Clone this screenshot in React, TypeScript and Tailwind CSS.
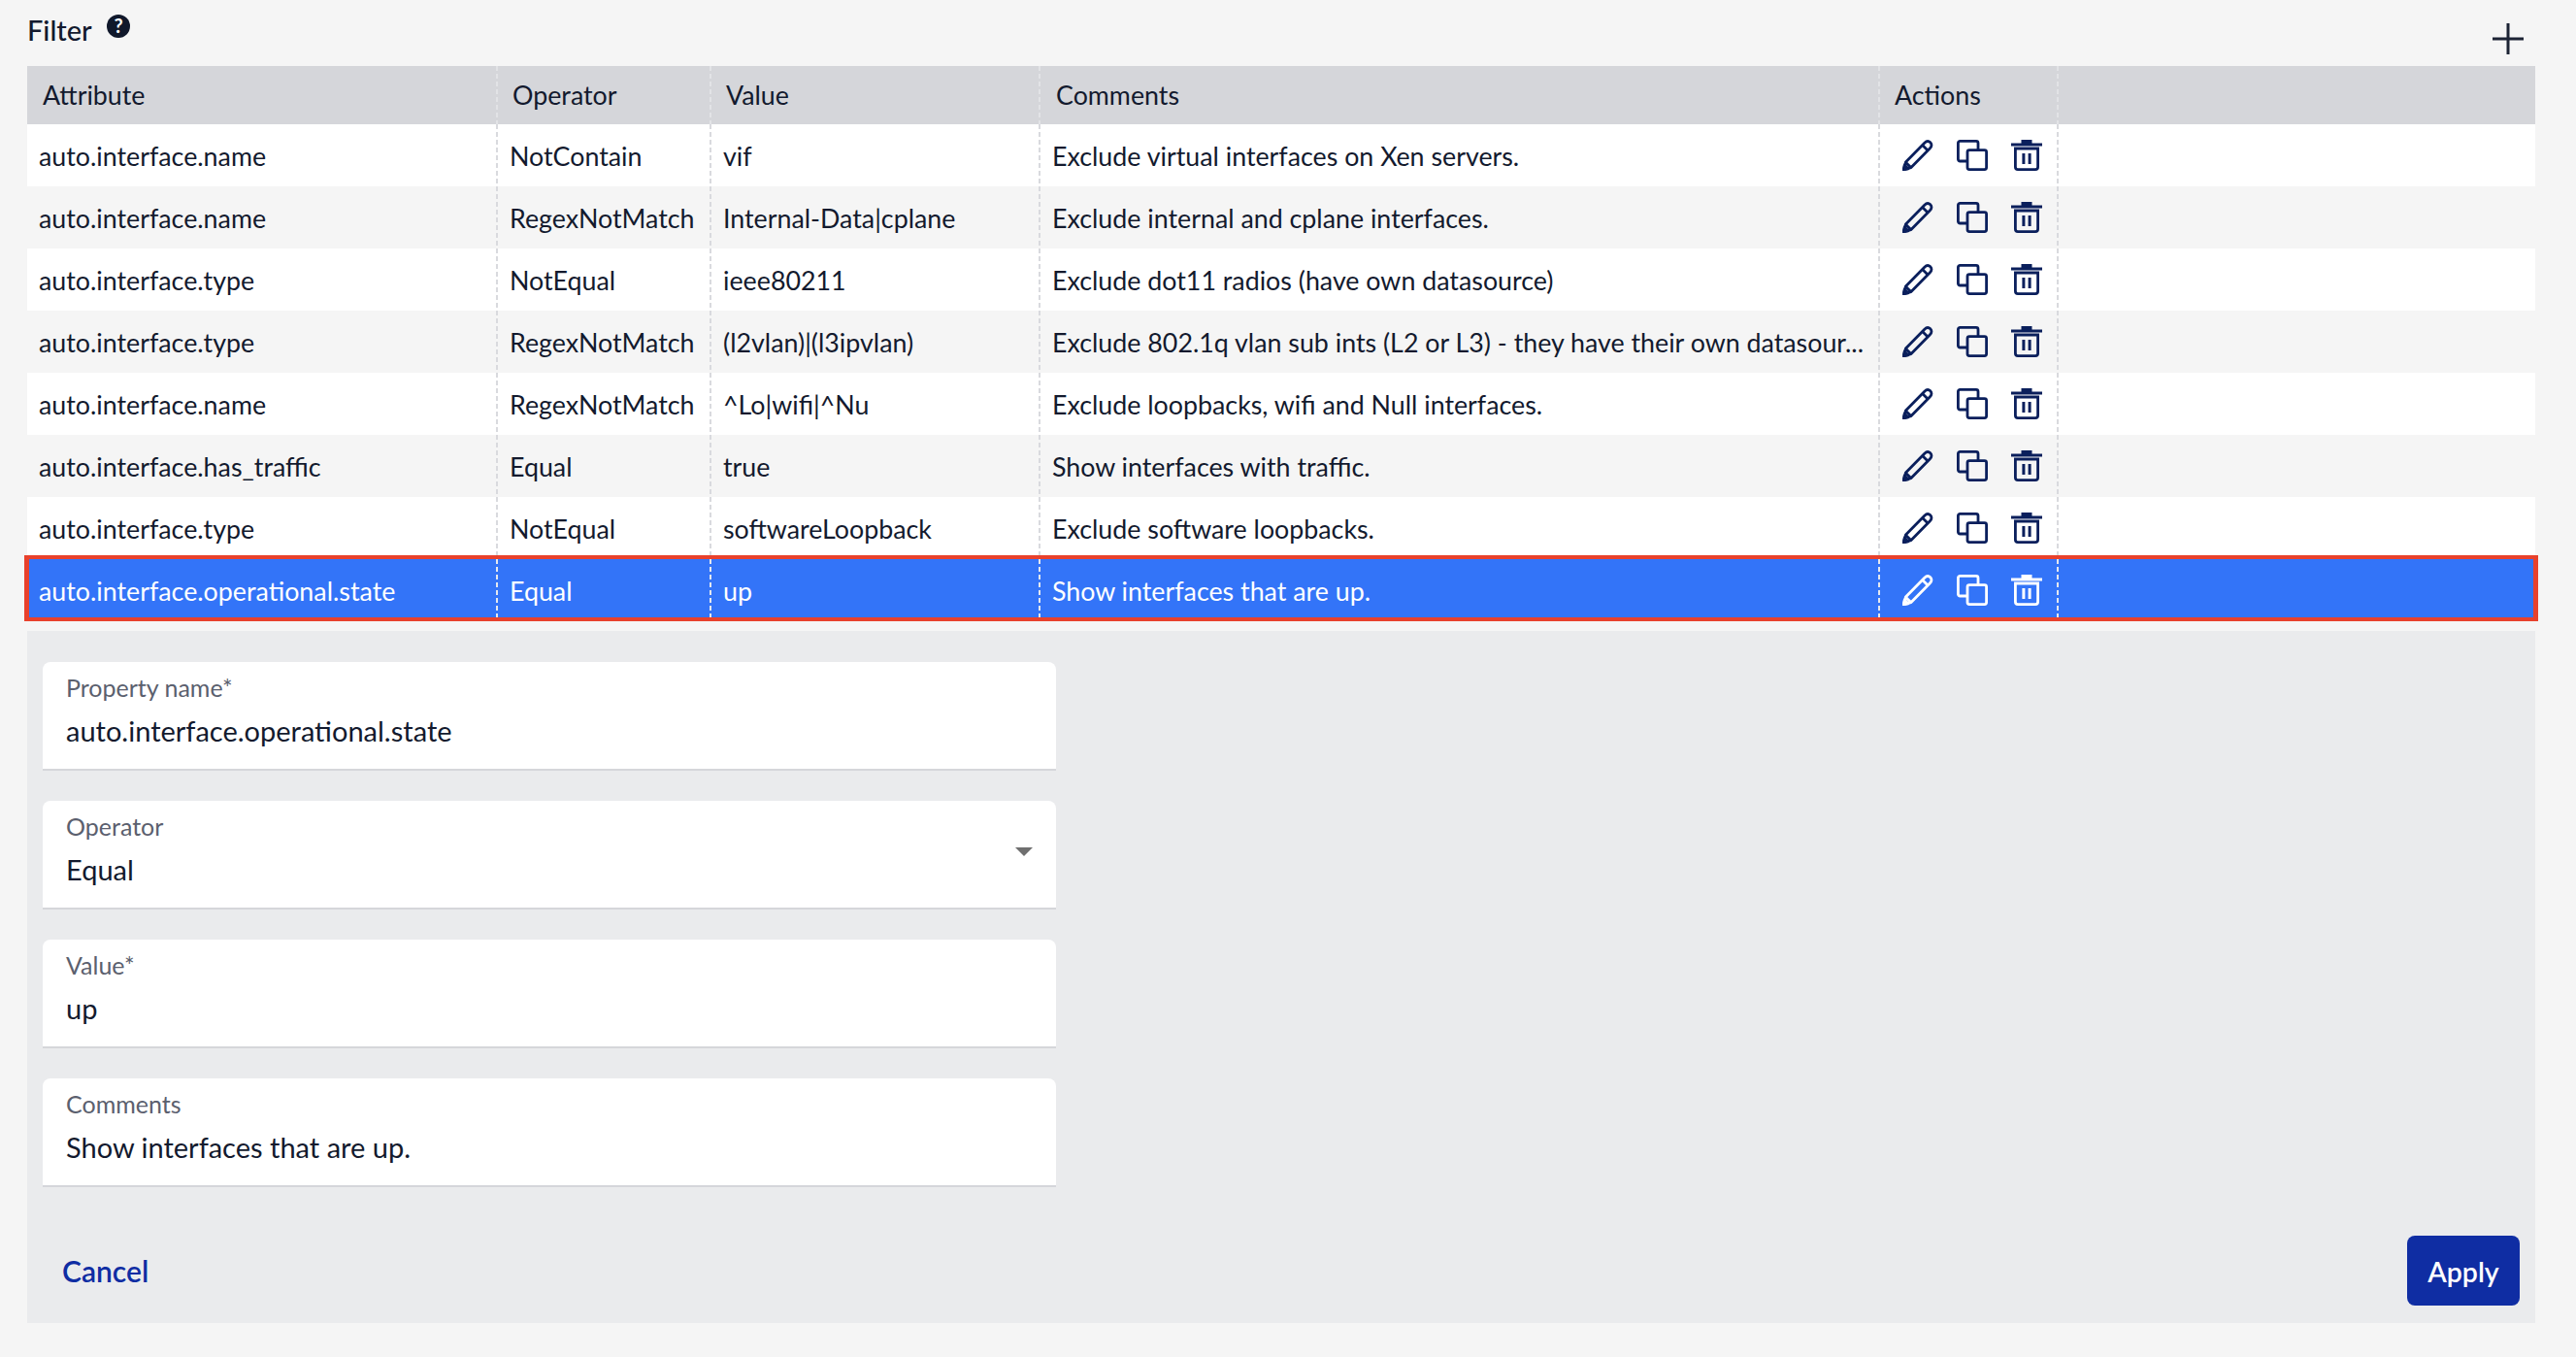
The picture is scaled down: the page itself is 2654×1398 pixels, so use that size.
import React from "react";

type Row = { attr: string; op: string; value: string; comment: string };

const rows: Row[] = [
  { attr: "auto.interface.name", op: "NotContain", value: "vif", comment: "Exclude virtual interfaces on Xen servers." },
  { attr: "auto.interface.name", op: "RegexNotMatch", value: "Internal-Data|cplane", comment: "Exclude internal and cplane interfaces." },
  { attr: "auto.interface.type", op: "NotEqual", value: "ieee80211", comment: "Exclude dot11 radios (have own datasource)" },
  { attr: "auto.interface.type", op: "RegexNotMatch", value: "(l2vlan)|(l3ipvlan)", comment: "Exclude 802.1q vlan sub ints (L2 or L3) - they have their own datasour..." },
  { attr: "auto.interface.name", op: "RegexNotMatch", value: "^Lo|wifi|^Nu", comment: "Exclude loopbacks, wifi and Null interfaces." },
  { attr: "auto.interface.has_traffic", op: "Equal", value: "true", comment: "Show interfaces with traffic." },
  { attr: "auto.interface.type", op: "NotEqual", value: "softwareLoopback", comment: "Exclude software loopbacks." },
  { attr: "auto.interface.operational.state", op: "Equal", value: "up", comment: "Show interfaces that are up." },
];

const gridCols = "grid grid-cols-[483px_220px_339px_865px_184px_1fr]";
const dash =
  "bg-[repeating-linear-gradient(to_bottom,#d9dade_0,#d9dade_5px,transparent_5px,transparent_8px)] bg-no-repeat bg-[length:2px_100%]";
const dashHead =
  "bg-[repeating-linear-gradient(to_bottom,#e2e3e6_0,#e2e3e6_5px,transparent_5px,transparent_8px)] bg-no-repeat bg-[length:2px_100%]";
const dashLight =
  "bg-[repeating-linear-gradient(to_bottom,#e4e7ee_0,#e4e7ee_5px,transparent_5px,transparent_8px)] bg-no-repeat bg-[length:2px_100%]";

function Pencil() {
  return (
    <svg width="32" height="32" viewBox="0 0 32 32" fill="none" stroke="currentColor" strokeWidth="2.8" strokeLinejoin="round">
      <path d="M1.6 30.4 3.4 23 22.8 3.2c2-2 4.4-2 6-.4s1.6 4-.4 6L9 28.6z" />
      <path d="M20.6 5.4l6 6M3.4 23.2l5.4 5.4" />
      <path d="M1 31l1.2-5 3.8 3.8z" fill="currentColor" />
    </svg>
  );
}

function Copy() {
  return (
    <svg width="32" height="32" viewBox="0 0 32 32" fill="none" stroke="currentColor" strokeWidth="2.8" strokeLinejoin="round">
      <path d="M10 22H3.4a2 2 0 0 1-2-2V3.4a2 2 0 0 1 2-2H20a2 2 0 0 1 2 2V10" />
      <rect x="11" y="10.6" width="19.6" height="20" rx="2" />
    </svg>
  );
}

function Trash() {
  return (
    <svg width="32" height="32" viewBox="0 0 32 32" fill="currentColor">
      <path d="M10.5 0h11v3.4H32v3.2H0V3.4h10.5z" />
      <path fill="none" stroke="currentColor" strokeWidth="2.8" d="M4.4 9v19a2.6 2.6 0 0 0 2.6 2.6h18a2.6 2.6 0 0 0 2.6-2.6V9z" />
      <rect x="11.4" y="14" width="3" height="11" />
      <rect x="17.6" y="14" width="3" height="11" />
    </svg>
  );
}

function Field({ label, value, select }: { label: string; value: string; select?: boolean }) {
  return (
    <div className="relative w-[1044px] h-[112px] bg-white rounded-t-[8px] border-b-2 border-[#d5d6da] pl-[24px] pt-[12px]">
      <div className="text-[25px] leading-[28px] text-[#5b606e]">{label}</div>
      <div className="mt-[14px] text-[29px] leading-[34px] text-[#131a2e]">{value}</div>
      {select && (
        <div className="absolute left-[1002px] top-[48px] w-0 h-0 border-x-[9px] border-x-transparent border-t-[9px] border-t-[#6f6f6f]" />
      )}
    </div>
  );
}

export default function App() {
  return (
    <div className="relative w-[2654px] h-[1398px] bg-[#f5f5f5] overflow-hidden font-['Lato','Liberation_Sans',sans-serif] text-[#131a2e]">
      <div className="ml-[28px] w-[2584px]">
        {/* title */}
        <div className="h-[68px] flex justify-between">
          <div className="flex items-start">
            <span className="mt-[13px] text-[29px] leading-[36px] font-medium">Filter</span>
            <svg className="ml-[15px] mt-[15px]" width="24" height="24" viewBox="0 0 24 24">
              <circle cx="12" cy="12" r="12" fill="#10182b" />
              <text x="12" y="19" textAnchor="middle" fontSize="20" fontWeight="700" fill="#fff" fontFamily="Lato">?</text>
            </svg>
          </div>
          <svg className="mt-[24px] mr-[12px]" width="32" height="32" viewBox="0 0 32 32" stroke="#1c2334" strokeWidth="3">
            <path d="M16 0v32M0 16h32" />
          </svg>
        </div>

        {/* table */}
        <div className={`${gridCols} h-[60px] bg-[#d5d6da] text-[26.8px] items-stretch`}>
          <div className="pl-[16px] flex items-center">Attribute</div>
          <div className={`pl-[17px] flex items-center ${dashHead}`}>Operator</div>
          <div className={`pl-[17px] flex items-center ${dashHead}`}>Value</div>
          <div className={`pl-[18px] flex items-center ${dashHead}`}>Comments</div>
          <div className={`pl-[17px] flex items-center ${dashHead}`}>Actions</div>
          <div className={dashHead} />
        </div>
        {rows.map((r, i) => {
          const selected = i === rows.length - 1;
          const bg = selected ? "bg-[#3374f8] text-white" : i % 2 === 0 ? "bg-white" : "bg-[#f5f5f5]";
          const d = selected ? dashLight : dash;
          return (
            <div key={i} className={`${gridCols} h-[64px] text-[26.8px] whitespace-nowrap ${bg}`}>
              <div className="pl-[12px] pt-[2px] flex items-center">{r.attr}</div>
              <div className={`pl-[14px] pt-[2px] flex items-center ${d}`}>{r.op}</div>
              <div className={`pl-[14px] pt-[2px] flex items-center ${d}`}>{r.value}</div>
              <div className={`pl-[14px] pt-[2px] flex items-center ${d}`}>{r.comment}</div>
              <div className={`pl-[25px] flex items-center gap-[24px] ${d} ${selected ? "text-white" : "text-[#0a1f5c]"}`}>
                <Pencil />
                <Copy />
                <Trash />
              </div>
              <div className={d} />
            </div>
          );
        })}

        {/* form */}
        <div className="mt-[10px] h-[713px] bg-[#eaebed] px-[16px] pt-[32px] relative">
          <div className="flex flex-col gap-[31px]">
            <Field label="Property name*" value="auto.interface.operational.state" />
            <Field label="Operator" value="Equal" select />
            <Field label="Value*" value="up" />
            <Field label="Comments" value="Show interfaces that are up." />
          </div>
          <div className="absolute left-[36px] right-[16px] bottom-[18px] flex items-center justify-between">
            <span className="text-[30px] font-semibold text-[#0f2da3]">Cancel</span>
            <button className="w-[116px] h-[72px] pt-[2px] rounded-[8px] bg-[#0f2da3] text-white text-[28.5px] font-semibold">Apply</button>
          </div>
        </div>
      </div>

      {/* highlight annotation */}
      <div className="absolute left-[25px] top-[572px] w-[2590px] h-[68px] border-y-4 border-x-[5px] border-[#e8412c]" />
    </div>
  );
}
